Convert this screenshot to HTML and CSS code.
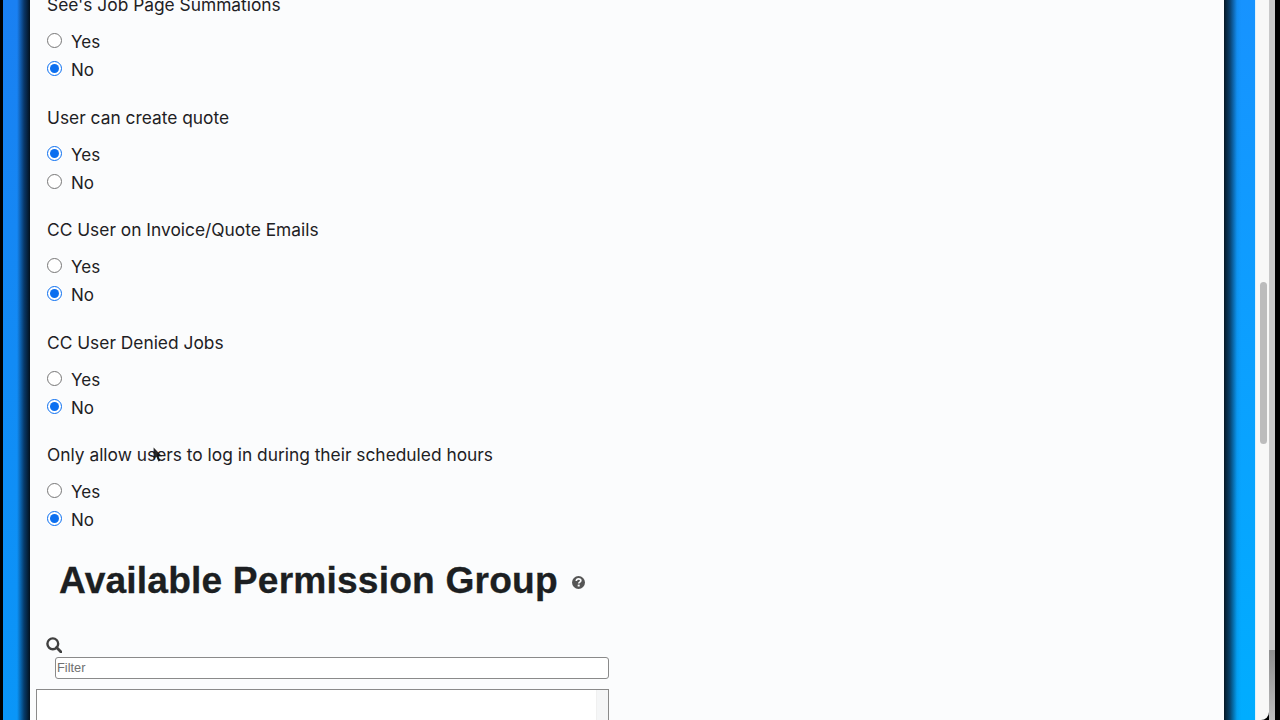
FILE: index.html
```html
<!DOCTYPE html>
<html lang="en">
<head>
<meta charset="utf-8">
<title>User settings</title>
<link rel="stylesheet" href="styles.css">
</head>
<body>
<div class="desktop">
  <div class="edge-left"></div>
  <main class="panel">
    <div class="content">
      <section class="group">
        <div class="group-label">See's Job Page Summations</div>
        <label class="opt"><input type="radio" name="a"><span>Yes</span></label>
        <label class="opt"><input type="radio" name="a" checked><span>No</span></label>
      </section>
      <section class="group">
        <div class="group-label">User can create quote</div>
        <label class="opt"><input type="radio" name="b" checked><span>Yes</span></label>
        <label class="opt"><input type="radio" name="b"><span>No</span></label>
      </section>
      <section class="group">
        <div class="group-label">CC User on Invoice/Quote Emails</div>
        <label class="opt"><input type="radio" name="c"><span>Yes</span></label>
        <label class="opt"><input type="radio" name="c" checked><span>No</span></label>
      </section>
      <section class="group">
        <div class="group-label">CC User Denied Jobs</div>
        <label class="opt"><input type="radio" name="d"><span>Yes</span></label>
        <label class="opt"><input type="radio" name="d" checked><span>No</span></label>
      </section>
      <section class="group">
        <div class="group-label">Only allow users to log in during their scheduled hours</div>
        <label class="opt"><input type="radio" name="e"><span>Yes</span></label>
        <label class="opt"><input type="radio" name="e" checked><span>No</span></label>
      </section>
      <div class="heading-row">
        <h2 class="heading">Available Permission Group</h2>
        <svg class="help" viewBox="0 0 14 14" aria-hidden="true">
          <circle cx="7" cy="7" r="7" fill="#555"/>
          <path d="M4.6 5.4C4.7 4 5.8 3.1 7.1 3.1C8.5 3.1 9.5 4 9.5 5.2C9.5 6.6 7.3 6.6 7.2 8.1" fill="none" stroke="#fbfcfd" stroke-width="1.8"/>
          <rect x="6.1" y="9.3" width="2.2" height="2" fill="#fbfcfd"/>
        </svg>
      </div>
      <svg class="search" viewBox="0 0 16 16" aria-hidden="true">
        <circle cx="6.8" cy="6.8" r="5.4" fill="none" stroke="#404040" stroke-width="2.4"/>
        <path d="M10.6 10.6L15 15" fill="none" stroke="#404040" stroke-width="2.8" stroke-linecap="round"/>
      </svg>
      <input class="filter" type="text" placeholder="Filter">
      <div class="listbox"><div class="listbox-bar"></div></div>
    </div>
    <svg class="cursor" viewBox="0 0 10 16" aria-hidden="true">
      <path d="M0.6 0.4V12.4L3.4 9.8L5.4 14.6L7.2 13.8L5.2 9.2H9Z" fill="#111"/>
    </svg>
  </main>
  <div class="edge-right"></div>
  <aside class="scroller"><div class="thumb"></div></aside>
  <div class="outer">
    <div class="outer-lower"></div>
  </div>
  <div class="frame-black"></div>
</div>
</body>
</html>
```

FILE: styles.css
```css
* { box-sizing: border-box; }
html, body { margin: 0; height: 100%; overflow: hidden; }
body { font-family: Inter, "Liberation Sans", sans-serif; color: #1e2124; background: #000; }
.desktop { display: flex; width: 1280px; height: 720px; overflow: hidden; }
.edge-left {
  width: 30px; flex: none;
  background:
    linear-gradient(90deg, #000 0, #000 3px, rgba(0,0,0,0) 3.5px, rgba(0,0,0,0) 17px, rgba(4,30,60,.75) 24px, #03101c 30px),
    linear-gradient(180deg, #1a80f2, #0a96f8);
}
.panel { position: relative; width: 1194px; flex: none; height: 720px; overflow: hidden; background: #fbfcfd; }
.content { margin-top: -9px; padding-left: 17px; }
.group { height: 112.5px; }
.group-label { height: 27px; margin-bottom: 10px; font-size: 17.35px; line-height: 28px; white-space: nowrap; }
.opt { display: flex; align-items: flex-start; height: 28px; font-size: 17px; line-height: 28px; }
.opt input { width: 15px; height: 15px; margin: 5px 9px 0 0; accent-color: #0b6ff0; }
.heading-row { display: flex; align-items: center; margin-left: 12px; height: 53px; }
.heading { margin: 0; font-family: "Liberation Sans", Arial, sans-serif; font-weight: 700; font-size: 37.2px; line-height: 53px; letter-spacing: .16px; color: #1c1f22; white-space: nowrap; -webkit-text-stroke: .3px #1c1f22; }
.help { width: 13px; height: 13px; margin-left: 14px; margin-top: 5px; flex: none; }
.search { display: block; width: 16px; height: 16px; margin: 30px 0 0 -1px; }
.filter {
  display: block; width: 554.5px; height: 22px; margin: 4px 0 0 7.5px; padding: 0 1.5px;
  border: 1px solid #8a8a8a; border-radius: 3px; background: #fff;
  font-family: "Liberation Sans", Arial, sans-serif; font-size: 12.8px; color: #333; outline: none;
}
.filter::placeholder { color: #707070; }
.listbox { display: flex; justify-content: flex-end; width: 573px; height: 120px; margin: 10px 0 0 -11px; border: 1px solid #8a8a8a; background: #fff; }
.listbox-bar { width: 12px; background: #f5f6f7; border-left: 1px solid #f0f0f0; }
.cursor { position: absolute; left: 123px; top: 447px; width: 10px; height: 16px; opacity: .9; }
.edge-right {
  width: 31px; flex: none;
  background:
    linear-gradient(90deg, #061825 0, rgba(8,50,85,.85) 6px, rgba(10,120,200,.25) 13px, rgba(0,0,0,0) 17px),
    linear-gradient(180deg, #1793ff, #00adff);
}
.scroller { width: 14px; flex: none; padding: 282px 3px 0 4px; background: #f8f8f7; border-left: 1px solid #dff1fb; border-bottom-right-radius: 8px; }
.thumb { width: 7px; height: 162px; border-radius: 3.5px; background: #bcbcbc; }
.outer { display: flex; flex-direction: column; justify-content: flex-end; width: 6px; flex: none; background: #c9c9c9; }
.outer-lower { height: 70px; background: linear-gradient(180deg, #8f8f8f, #bdbdbd); }
.frame-black { flex: 1; background: #000; }
```
